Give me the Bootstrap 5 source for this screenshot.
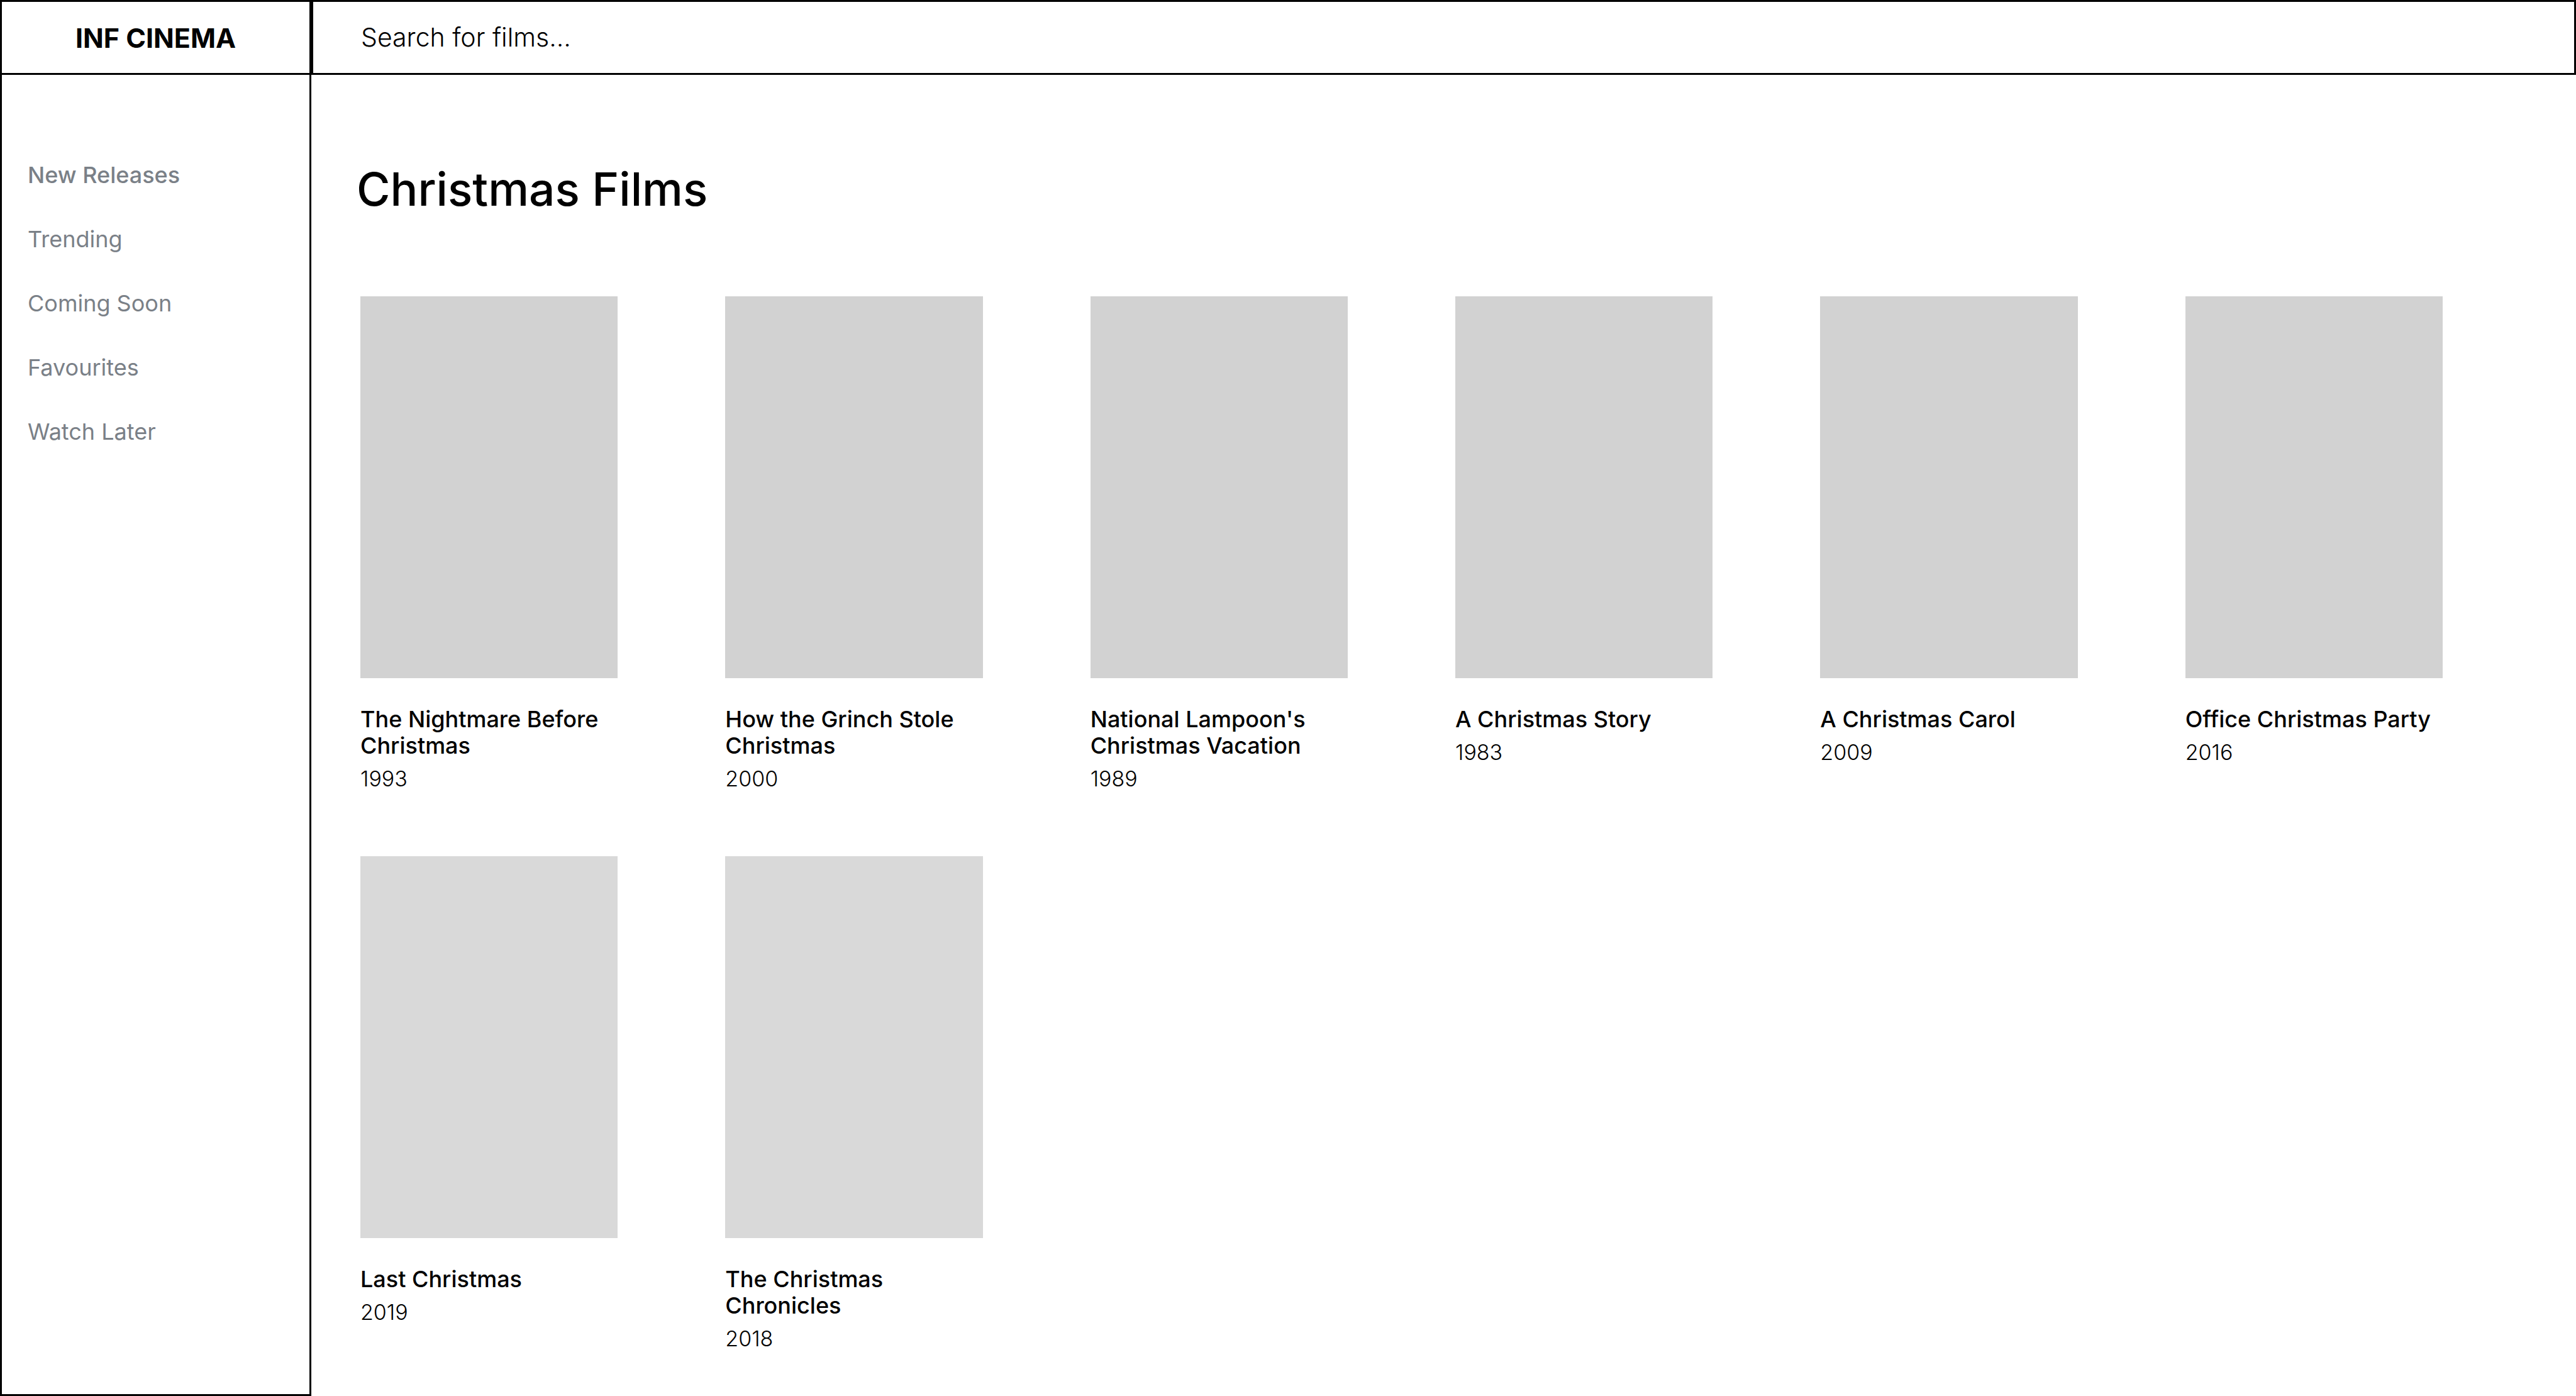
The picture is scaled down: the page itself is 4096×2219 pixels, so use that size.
<!DOCTYPE html>
<html lang="en">
<head>
<meta charset="utf-8">
<meta name="viewport" content="width=device-width, initial-scale=1">
<title>INF CINEMA</title>
<link href="https://cdn.jsdelivr.net/npm/bootstrap@5.3.0/dist/css/bootstrap.min.css" rel="stylesheet">
<style>
  body { font-family: Inter, "Liberation Sans", sans-serif; font-size: 36px; line-height: 42px; color: #000; background: #fff; }
  .side-width { flex: 0 0 495px; }
  .line-box { border: 3px solid #000; }
  .top-bar { height: 119px; }
  .brand-name { font-size: 43px; line-height: 52px; font-weight: 700; color: #000; }
  .search-box, .search-box:focus { border: 3px solid #000; border-radius: 0; box-shadow: none; font-size: 41px; font-weight: 300; color: #000; padding: 0 76px; }
  .search-box::placeholder { color: #000; opacity: 1; }
  .side-menu { padding: 138px 41px 60px; gap: 60px; }
  .side-menu .nav-link { padding: 0; color: #7a8087; }
  .side-menu .nav-link.active { font-weight: 500; }
  .content-area { padding: 140px 212px 20px 78px; }
  .page-title { font-size: 73px; line-height: 84px; font-weight: 500; margin: 0 0 128px -6px; }
  .film-grid { grid-template-columns: repeat(6, minmax(0, 1fr)); column-gap: 171px; row-gap: 102px; }
  .poster { aspect-ratio: 120 / 178; background: #d2d2d2; margin-bottom: 44px; }
  .poster-light { background: #d9d9d9; }
  .film-name { font-size: 36px; line-height: 42px; font-weight: 500; margin: 0 0 11px; }
  .film-year { font-size: 34px; font-weight: 300; margin: 0; }
</style>
</head>
<body>
<div class="d-flex flex-column min-vh-100">
  <header class="top-bar d-flex">
    <a href="#" class="brand-name side-width line-box d-flex align-items-center justify-content-center text-decoration-none">INF CINEMA</a>
    <form class="d-flex flex-grow-1" role="search">
      <input id="film-search" type="search" class="form-control search-box" aria-label="Search for films" placeholder="Search for films...">
    </form>
  </header>
  <div class="d-flex flex-grow-1">
    <nav class="side-width line-box border-top-0">
      <ul class="nav flex-column side-menu">
        <li class="nav-item"><a class="nav-link active" aria-current="page" href="#">New Releases</a></li>
        <li class="nav-item"><a class="nav-link" href="#">Trending</a></li>
        <li class="nav-item"><a class="nav-link" href="#">Coming Soon</a></li>
        <li class="nav-item"><a class="nav-link" href="#">Favourites</a></li>
        <li class="nav-item"><a class="nav-link" href="#">Watch Later</a></li>
      </ul>
    </nav>
    <main class="content-area flex-grow-1">
      <h1 class="page-title">Christmas Films</h1>
      <div class="film-grid d-grid">
        <article><div class="poster"></div><h2 class="film-name">The Nightmare Before Christmas</h2><p class="film-year">1993</p></article>
        <article><div class="poster"></div><h2 class="film-name">How the Grinch Stole Christmas</h2><p class="film-year">2000</p></article>
        <article><div class="poster"></div><h2 class="film-name">National Lampoon's Christmas Vacation</h2><p class="film-year">1989</p></article>
        <article><div class="poster"></div><h2 class="film-name">A Christmas Story</h2><p class="film-year">1983</p></article>
        <article><div class="poster"></div><h2 class="film-name">A Christmas Carol</h2><p class="film-year">2009</p></article>
        <article><div class="poster"></div><h2 class="film-name">Office Christmas Party</h2><p class="film-year">2016</p></article>
        <article><div class="poster poster-light"></div><h2 class="film-name">Last Christmas</h2><p class="film-year">2019</p></article>
        <article><div class="poster poster-light"></div><h2 class="film-name">The Christmas Chronicles</h2><p class="film-year">2018</p></article>
      </div>
    </main>
  </div>
</div>
<script src="https://cdn.jsdelivr.net/npm/bootstrap@5.3.0/dist/js/bootstrap.bundle.min.js"></script>
</body>
</html>
